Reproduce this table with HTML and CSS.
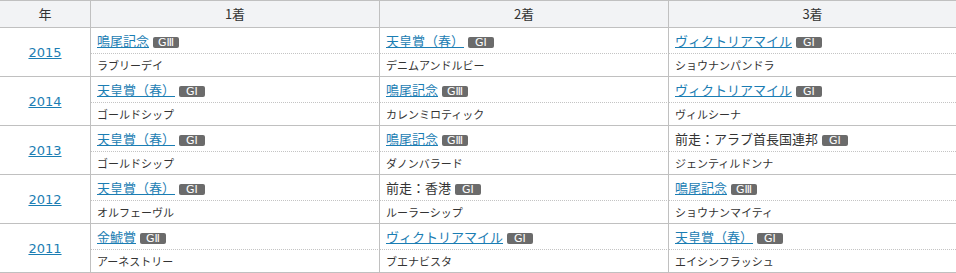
FILE: index.html
```html
<!DOCTYPE html>
<html lang="ja">
<head>
<meta charset="utf-8">
<link rel="stylesheet" href="styles.css">
</head>
<body>
<table class="results">
  <thead>
    <tr>
      <th class="c-year">年</th>
      <th class="c-place">1着</th>
      <th class="c-place">2着</th>
      <th class="c-place c-last">3着</th>
    </tr>
  </thead>
  <tbody>
    <tr class="race-row">
      <td class="year" rowspan="2"><a href="#">2015</a></td>
      <td class="race"><a href="#">鳴尾記念</a> <span class="grade">GⅢ</span></td>
      <td class="race"><a href="#">天皇賞（春）</a> <span class="grade">GⅠ</span></td>
      <td class="race last"><a href="#">ヴィクトリアマイル</a> <span class="grade">GⅠ</span></td>
    </tr>
    <tr class="horse-row">
      <td class="horse">ラブリーデイ</td>
      <td class="horse">デニムアンドルビー</td>
      <td class="horse last">ショウナンパンドラ</td>
    </tr>

    <tr class="race-row">
      <td class="year" rowspan="2"><a href="#">2014</a></td>
      <td class="race"><a href="#">天皇賞（春）</a> <span class="grade">GⅠ</span></td>
      <td class="race"><a href="#">鳴尾記念</a> <span class="grade">GⅢ</span></td>
      <td class="race last"><a href="#">ヴィクトリアマイル</a> <span class="grade">GⅠ</span></td>
    </tr>
    <tr class="horse-row">
      <td class="horse">ゴールドシップ</td>
      <td class="horse">カレンミロティック</td>
      <td class="horse last">ヴィルシーナ</td>
    </tr>

    <tr class="race-row">
      <td class="year" rowspan="2"><a href="#">2013</a></td>
      <td class="race"><a href="#">天皇賞（春）</a> <span class="grade">GⅠ</span></td>
      <td class="race"><a href="#">鳴尾記念</a> <span class="grade">GⅢ</span></td>
      <td class="race last">前走：アラブ首長国連邦 <span class="grade">GⅠ</span></td>
    </tr>
    <tr class="horse-row">
      <td class="horse">ゴールドシップ</td>
      <td class="horse">ダノンバラード</td>
      <td class="horse last">ジェンティルドンナ</td>
    </tr>

    <tr class="race-row">
      <td class="year" rowspan="2"><a href="#">2012</a></td>
      <td class="race"><a href="#">天皇賞（春）</a> <span class="grade">GⅠ</span></td>
      <td class="race">前走：香港 <span class="grade">GⅠ</span></td>
      <td class="race last"><a href="#">鳴尾記念</a> <span class="grade">GⅢ</span></td>
    </tr>
    <tr class="horse-row">
      <td class="horse">オルフェーヴル</td>
      <td class="horse">ルーラーシップ</td>
      <td class="horse last">ショウナンマイティ</td>
    </tr>

    <tr class="race-row">
      <td class="year" rowspan="2"><a href="#">2011</a></td>
      <td class="race"><a href="#">金鯱賞</a> <span class="grade">GⅡ</span></td>
      <td class="race"><a href="#">ヴィクトリアマイル</a> <span class="grade">GⅠ</span></td>
      <td class="race last"><a href="#">天皇賞（春）</a> <span class="grade">GⅠ</span></td>
    </tr>
    <tr class="horse-row">
      <td class="horse">アーネストリー</td>
      <td class="horse">ブエナビスタ</td>
      <td class="horse last">エイシンフラッシュ</td>
    </tr>
  </tbody>
</table>
</body>
</html>
```
FILE: styles.css
```css
html, body {
  margin: 0;
  padding: 0;
  background: #fff;
}
body {
  font-family: "Noto Sans CJK JP", "Noto Sans", sans-serif;
  color: #333;
  font-size: 13px;
}
.results {
  width: 956px;
  table-layout: fixed;
  border-collapse: separate;
  border-spacing: 0;
}
.results th,
.results td {
  box-sizing: border-box;
  padding: 0;
  vertical-align: middle;
  border-right: 1px solid #c0c0c0;
  white-space: nowrap;
}
.results th.c-last,
.results td.last {
  border-right: none;
}
.results thead th {
  height: 28px;
  background: #f2f3f5;
  border-top: 1px solid #c0c0c0;
  border-bottom: 1px solid #c0c0c0;
  font-weight: normal;
  font-size: 13px;
  line-height: 16px;
  text-align: center;
  color: #333;
}
.c-year { width: 91px; }
.c-place { width: 289px; }
.c-place.c-last { width: 287px; }

a {
  color: #1b7db3;
  text-decoration: underline;
}
.year {
  text-align: center;
  border-bottom: 1px solid #c0c0c0;
  font-family: "DejaVu Sans", "Noto Sans", sans-serif;
  font-size: 13px;
  padding-top: 1px;
}
.race {
  height: 26px;
  padding-left: 6px !important;
  border-bottom: 1px dotted #c4c4c4;
  font-size: 13px;
  line-height: 16px;
}
.horse {
  height: 23px;
  padding-left: 6px !important;
  border-bottom: 1px solid #c0c0c0;
  font-size: 11px;
  line-height: 14px;
}
.grade {
  display: inline-block;
  vertical-align: 0;
  min-width: 26px;
  box-sizing: border-box;
  padding: 0 3px;
  text-align: center;
  background: #6b6b6b;
  color: #fff;
  font-family: "DejaVu Sans", sans-serif;
  font-size: 11px;
  line-height: 11px;
  height: 11px;
  border-radius: 2px;
  margin-left: 1px;
}
```
